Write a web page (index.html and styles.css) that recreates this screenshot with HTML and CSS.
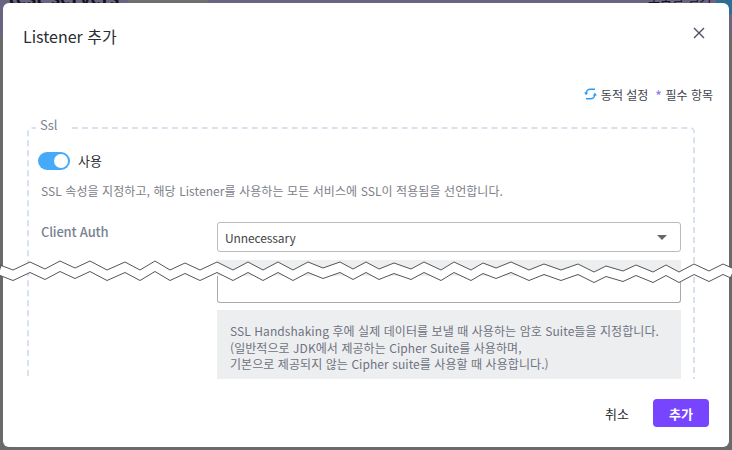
FILE: index.html
```html
<!DOCTYPE html>
<html lang="ko">
<head>
    <meta charset="UTF-8">
    <meta name="viewport" content="width=device-width, initial-scale=1.0">
    <title>Listener 추가</title>
    <link rel="stylesheet" href="styles.css">
</head>
<body>
    <div class="page">
        <div class="page-top">
            <span class="page-name">test-servers</span>
            <span class="page-stripe"></span>
            <span class="page-link">도움말 열기</span>
            <span class="page-corner"></span>
        </div>
    </div>

    <div class="modal">
        <div class="modal-header">
            <h2 class="modal-title">Listener 추가</h2>
            <button class="modal-close" aria-label="닫기">
                <svg width="12" height="12" viewBox="0 0 12 12"><path d="M1 1l10 10M11 1L1 11" fill="none" stroke="#4a5060" stroke-width="1.4"/></svg>
            </button>
        </div>

        <div class="modal-legend">
            <svg class="sync-icon" width="13" height="12" viewBox="0 0 13 12">
                <path d="M2.2 5.2A4.2 4.2 0 0 1 6.4 1.2H11" fill="none" stroke="#2b9cf5" stroke-width="1.5"/>
                <path d="M10.8 6.8A4.2 4.2 0 0 1 6.6 10.8H2" fill="none" stroke="#2b9cf5" stroke-width="1.5"/>
                <path d="M0 4.6h4.2L2.1 7.2zM13 7.4H8.8L10.9 4.8z" fill="#2b9cf5"/>
            </svg>
            <span>동적 설정</span>
            <span class="req-mark">*</span>
            <span>필수 항목</span>
        </div>

        <div class="modal-body">
            <fieldset class="group">
                <legend class="group-title">Ssl</legend>

                <div class="switch-row">
                    <span class="switch"><span class="switch-knob"></span></span>
                    <span class="switch-label">사용</span>
                </div>
                <p class="group-desc">SSL 속성을 지정하고, 해당 Listener를 사용하는 모든 서비스에 SSL이 적용됨을 선언합니다.</p>

                <div class="field">
                    <label class="field-label">Client Auth</label>
                    <div class="field-control">
                        <div class="select">
                            <span>Unnecessary</span>
                            <span class="select-arrow"></span>
                        </div>
                        <div class="hint-cut"></div>
                        <div class="input-cut"></div>
                        <div class="hint">SSL Handshaking 후에 실제 데이터를 보낼 때 사용하는 암호 Suite들을 지정합니다.<br>(일반적으로 JDK에서 제공하는 Cipher Suite를 사용하며,<br>기본으로 제공되지 않는 Cipher suite를 사용할 때 사용합니다.)</div>
                    </div>
                </div>
            </fieldset>
        </div>

        <div class="modal-footer">
            <button class="btn-cancel">취소</button>
            <button class="btn-add">추가</button>
        </div>
    </div>

    <!-- torn edge over the screenshot -->
    <svg class="tear" width="732" height="40" viewBox="0 255 732 40">
        <defs>
            <polyline id="zigzag" fill="none" points="0,265 13,270 30,262 45,269 60,261 75,268 90,261 107,270 125,262 140,270 155,261 170,270 185,263 200,270 217,262 233,270 248,262 263,270 278,262 293,270 308,262 323,268 340,262 353,269 366,262 379,269 394,263 411,269 424,262 441,270 454,262 471,270 483,263 496,268 511,262 529,270 544,264 561,270 578,264 594,272 606,266 623,271 636,265 653,272 666,265 679,272 694,264 709,271 723,264 732,268"/>
        </defs>
        <use href="#zigzag" y="5.2" stroke="#fff" stroke-width="9.6"/>
        <use href="#zigzag" stroke="#555" stroke-width="1"/>
        <use href="#zigzag" y="10.5" stroke="#555" stroke-width="1"/>
    </svg>
</body>
</html>
```

FILE: styles.css
```css
html, body {
    margin: 0;
    height: 100%;
    overflow: hidden;
}
body {
    font-family: "Noto Sans CJK KR", "Noto Sans", sans-serif;
    background-color: #6a6a6a;
}
button {
    font-family: inherit;
    border: none;
    background: none;
    padding: 0;
    cursor: pointer;
}
.page-top {
    display: flex;
    height: 35px;
    background: #6b6480;
    overflow: hidden;
}
.page-name {
    width: 120px;
    margin: -11px 0 0 8px;
    font-size: 19px;
    font-weight: 700;
    line-height: 16px;
    color: #14121c;
    white-space: nowrap;
}
.page-stripe {
    width: 80px;
    height: 4px;
    background: #706f70;
}
.page-link {
    margin: -10px 0 0 440px;
    width: 60px;
    font-size: 13px;
    line-height: 16px;
    color: #14121c;
    white-space: nowrap;
}
.page-corner {
    width: 16px;
    height: 14px;
    margin-left: auto;
    background: #2d6f94;
}
.modal {
    position: absolute;
    left: 3px;
    right: 3px;
    top: 3px;
    bottom: 3px;
    display: flex;
    flex-direction: column;
    background: #fff;
    border-radius: 6px;
}
.modal-header {
    display: flex;
    justify-content: space-between;
    align-items: center;
    height: 66px;
    padding: 0 24px 0 20px;
}
.modal-title {
    margin: 0;
    font-size: 16px;
    font-weight: 400;
    color: #2a2d34;
}
.modal-close {
    display: flex;
    margin-top: -6px;
}
.modal-legend {
    display: flex;
    justify-content: flex-end;
    align-items: center;
    gap: 4px;
    height: 18px;
    margin-top: 16px;
    padding-right: 16px;
    font-size: 12px;
    color: #3f4450;
}
.req-mark {
    margin-left: 3px;
    color: #9a7cff;
    font-weight: 700;
}
.modal-body {
    flex: 1;
    min-height: 0;
    overflow: hidden;
    padding: 14px 34px 0 24px;
}
.group {
    margin: 0;
    padding: 12px 12px 20px;
    border: 2px dashed #d8e2ee;
    border-radius: 5px;
}
.group-title {
    padding: 0 12px 6px 4px;
    margin-left: -5px;
    font-size: 13px;
    line-height: 16px;
    color: #7a8291;
}
.switch-row {
    display: flex;
    align-items: center;
    gap: 8px;
    margin-left: -3px;
}
.switch {
    display: flex;
    justify-content: flex-end;
    align-items: center;
    width: 32px;
    height: 18px;
    padding: 0 2px;
    box-sizing: border-box;
    border-radius: 9px;
    background: #45aaf9;
}
.switch-knob {
    width: 14px;
    height: 14px;
    border-radius: 50%;
    background: #fff;
}
.switch-label {
    font-size: 13px;
    color: #2a2d34;
}
.group-desc {
    margin: 12px 0 0;
    font-size: 12px;
    line-height: 18px;
    letter-spacing: 0.08px;
    color: #7c8089;
}
.field {
    display: flex;
    margin-top: 22px;
}
.field-label {
    width: 176px;
    font-size: 13px;
    font-weight: 500;
    line-height: 20px;
    letter-spacing: -0.2px;
    color: #7a8291;
}
.field-control {
    flex: 1;
}
.select {
    display: flex;
    justify-content: space-between;
    align-items: center;
    height: 30px;
    padding: 0 13px 0 7px;
    box-sizing: border-box;
    border: 1px solid #bbb;
    border-radius: 3px;
    font-size: 12px;
    letter-spacing: -0.1px;
    color: #444;
}
.select-arrow {
    width: 0;
    height: 0;
    border-left: 5px solid transparent;
    border-right: 5px solid transparent;
    border-top: 5px solid #666;
}
.hint-cut {
    height: 16px;
    margin-top: 8px;
    background: #edeef0;
}
.input-cut {
    height: 27px;
    box-sizing: border-box;
    border: 1px solid #aaa;
    border-top: none;
    border-radius: 0 0 3px 3px;
}
.hint {
    margin-top: 7px;
    padding: 13px 13px 6px;
    font-size: 12px;
    line-height: 16.5px;
    letter-spacing: 0.07px;
    color: #6d7280;
    background: #edeef0;
}
.modal-footer {
    display: flex;
    justify-content: flex-end;
    align-items: center;
    gap: 24px;
    flex: none;
    height: 68px;
    padding-right: 20px;
}
.btn-cancel {
    font-size: 13px;
    font-weight: 400;
    color: #2a2d34;
}
.btn-add {
    width: 56px;
    height: 28px;
    border-radius: 4px;
    font-size: 13px;
    font-weight: 700;
    color: #fff;
    background: #7744ff;
}
.tear {
    position: absolute;
    left: 0;
    top: 255px;
}
```
